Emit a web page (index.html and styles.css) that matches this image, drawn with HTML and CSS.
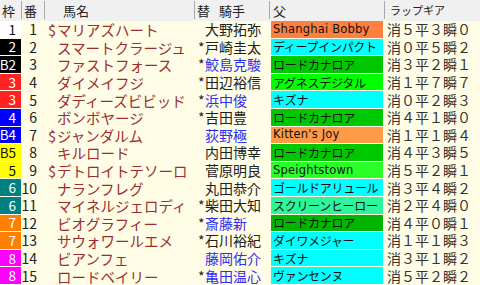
FILE: index.html
```html
<!DOCTYPE html>
<html lang="ja">
<head>
<meta charset="utf-8">
<link rel="stylesheet" href="styles.css">
</head>
<body>
<div class="board">
  <div class="row head">
    <div class="h c-waku">枠</div>
    <div class="h c-ban">番</div>
    <div class="h c-name">馬名</div>
    <div class="h c-jockey"><span class="kae">替</span>騎手</div>
    <div class="h c-sire">父</div>
    <div class="h c-lap">ラップギア</div>
  </div>

  <div class="row"><div class="waku w1">1</div><div class="ban">1</div><div class="name"><span class="mk">$</span>マリアズハート</div><div class="jockey"><span class="ast"></span>大野拓弥</div><div class="sire s-orange latin">Shanghai Bobby</div><div class="lap">消５平３瞬０</div></div>
  <div class="row"><div class="waku w2">2</div><div class="ban">2</div><div class="name"><span class="mk"></span>スマートクラージュ</div><div class="jockey"><span class="ast">*</span>戸崎圭太</div><div class="sire s-cyan">ディープインパクト</div><div class="lap">消０平５瞬２</div></div>
  <div class="row"><div class="waku w2">B2</div><div class="ban">3</div><div class="name"><span class="mk"></span>ファストフォース</div><div class="jockey blue"><span class="ast">*</span>鮫島克駿</div><div class="sire s-green">ロードカナロア</div><div class="lap">消３平２瞬１</div></div>
  <div class="row"><div class="waku w3">3</div><div class="ban">4</div><div class="name"><span class="mk"></span>ダイメイフジ</div><div class="jockey"><span class="ast">*</span>田辺裕信</div><div class="sire s-lime">アグネスデジタル</div><div class="lap">消１平７瞬７</div></div>
  <div class="row"><div class="waku w3">3</div><div class="ban">5</div><div class="name"><span class="mk"></span>ダディーズビビッド</div><div class="jockey blue"><span class="ast">*</span>浜中俊</div><div class="sire s-cyan">キズナ</div><div class="lap">消０平２瞬３</div></div>
  <div class="row"><div class="waku w4">4</div><div class="ban">6</div><div class="name"><span class="mk"></span>ボンボヤージ</div><div class="jockey"><span class="ast">*</span>吉田豊</div><div class="sire s-green">ロードカナロア</div><div class="lap">消４平１瞬０</div></div>
  <div class="row"><div class="waku w4">B4</div><div class="ban">7</div><div class="name"><span class="mk">$</span>ジャンダルム</div><div class="jockey blue"><span class="ast"></span>荻野極</div><div class="sire s-orange2 latin">Kitten's Joy</div><div class="lap">消１平１瞬４</div></div>
  <div class="row"><div class="waku w5">B5</div><div class="ban">8</div><div class="name"><span class="mk"></span>キルロード</div><div class="jockey"><span class="ast"></span>内田博幸</div><div class="sire s-green">ロードカナロア</div><div class="lap">消４平３瞬５</div></div>
  <div class="row"><div class="waku w5">5</div><div class="ban">9</div><div class="name"><span class="mk">$</span>デトロイトテソーロ</div><div class="jockey"><span class="ast"></span>菅原明良</div><div class="sire s-lime2 latin">Speightstown</div><div class="lap">消５平２瞬１</div></div>
  <div class="row"><div class="waku w6">6</div><div class="ban">10</div><div class="name"><span class="mk"></span>ナランフレグ</div><div class="jockey"><span class="ast"></span>丸田恭介</div><div class="sire s-cyan">ゴールドアリュール</div><div class="lap">消３平４瞬２</div></div>
  <div class="row"><div class="waku w6">6</div><div class="ban">11</div><div class="name"><span class="mk"></span>マイネルジェロディ</div><div class="jockey"><span class="ast">*</span>柴田大知</div><div class="sire s-spring">スクリーンヒーロー</div><div class="lap">消２平４瞬０</div></div>
  <div class="row"><div class="waku w7">7</div><div class="ban">12</div><div class="name"><span class="mk"></span>ビオグラフィー</div><div class="jockey blue"><span class="ast">*</span>斎藤新</div><div class="sire s-green2">ロードカナロア</div><div class="lap">消４平０瞬１</div></div>
  <div class="row"><div class="waku w7">7</div><div class="ban">13</div><div class="name"><span class="mk"></span>サウォワールエメ</div><div class="jockey"><span class="ast">*</span>石川裕紀</div><div class="sire s-cyan">ダイワメジャー</div><div class="lap">消１平１瞬３</div></div>
  <div class="row"><div class="waku w8">8</div><div class="ban">14</div><div class="name"><span class="mk"></span>ビアンフェ</div><div class="jockey blue"><span class="ast"></span>藤岡佑介</div><div class="sire s-cyan">キズナ</div><div class="lap">消３平１瞬２</div></div>
  <div class="row"><div class="waku w8">8</div><div class="ban">15</div><div class="name"><span class="mk"></span>ロードベイリー</div><div class="jockey blue"><span class="ast">*</span>亀田温心</div><div class="sire s-cyan">ヴァンセンヌ</div><div class="lap">消５平２瞬２</div></div>
</div>
</body>
</html>
```

FILE: styles.css
```css
html, body {
  margin: 0;
  padding: 0;
  background: #fffde6;
}

.board {
  width: 480px;
  height: 285px;
  display: grid;
  grid-template-rows: 21px repeat(15, 1fr);
  grid-template-columns: 480px;
  background: #fffde6;
  font-family: "Noto Sans CJK JP", "Noto Sans", sans-serif;
  overflow: hidden;
}

.row {
  display: grid;
  grid-template-columns: 22px 23px 150px 75px 115px 95px;
  min-height: 0;
}

.row > div {
  display: flex;
  align-items: center;
  white-space: nowrap;
  line-height: 15px;
  min-width: 0;
  min-height: 0;
}

.head {
  background: #f0f0f0;
}

.h {
  font-size: 13px;
  color: #222;
  border-right: 1px solid #a8a8a8;
  box-sizing: border-box;
  margin: 1px 0 2px;
}

.c-waku { padding-left: 2px; }
.c-ban { padding-left: 2px; }
.c-name { padding-left: 18px; }
.c-jockey { padding-left: 2px; }
.c-jockey .kae { margin-right: 9px; }
.c-sire { padding-left: 3px; }
.c-lap { padding-left: 5px; font-size: 11px; border-right: none; }

.waku {
  justify-content: flex-end;
  padding-right: 5px;
  font-size: 13.5px;
  color: #fff;
  margin: 0 1px 1px 0;
  box-sizing: border-box;
}

.w1 { background: #ffffff; color: #111; }
.w2 { background: #000000; }
.w3 { background: #ff2222; }
.w4 { background: #0000ff; }
.w5 { background: #ffff00; color: #111; }
.w6 { background: #008080; }
.w7 { background: #ff8000; }
.w8 { background: #ff00ff; }

.ban {
  justify-content: flex-end;
  padding-right: 8px;
  font-size: 14px;
  color: #222;
}

.name {
  font-size: 14.5px;
  color: #9b2d2d;
  padding-left: 3px;
}

.name .mk {
  display: inline-block;
  width: 9px;
}

.jockey {
  font-size: 14px;
  color: #222;
  padding-left: 3px;
}

.jockey.blue { color: #2f2ff0; }

.jockey .ast {
  display: inline-block;
  width: 7px;
  color: #222;
}

.sire {
  font-size: 12px;
  color: #111;
  padding-left: 2px;
  margin: 0 2px 1px 1px;
  letter-spacing: -0.3px;
}

.sire.latin {
  font-family: "DejaVu Sans", sans-serif;
  font-size: 11.5px;
  letter-spacing: 0.2px;
}

.s-orange { background: #ff7f3f; }
.s-orange2 { background: #ff9a46; }
.s-cyan { background: #00ffff; }
.s-green { background: #00c800; }
.s-green2 { background: #00b400; }
.s-lime { background: #00ff00; }
.s-lime2 { background: #2aff2a; }
.s-spring { background: #2cf59a; }

.lap {
  font-size: 14px;
  color: #333;
  padding-left: 2px;
}
```
